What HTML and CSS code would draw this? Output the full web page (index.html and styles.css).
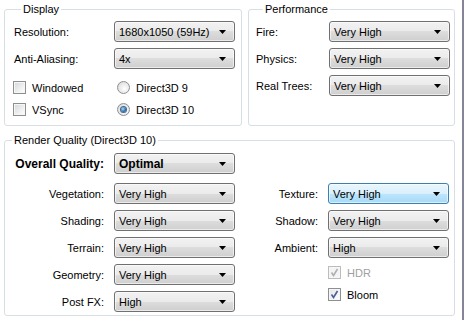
FILE: index.html
```html
<!DOCTYPE html>
<html lang="en">
  <head>
    <meta charset="UTF-8" />
    <title>Graphics Settings</title>
    <link rel="stylesheet" href="styles.css">
  </head>
  <body>
    <div class="panel">
      <div class="top-row">
        <fieldset class="group display">
          <legend>Display</legend>
          <div class="form display-form">
            <label>Resolution:</label>
            <div class="combo"><span>1680x1050 (59Hz)</span><svg class="arrow" width="7" height="4"><polygon points="0,0 7,0 3.5,4" /></svg></div>
            <label>Anti-Aliasing:</label>
            <div class="combo"><span>4x</span><svg class="arrow" width="7" height="4"><polygon points="0,0 7,0 3.5,4" /></svg></div>
          </div>
          <div class="options">
            <div class="opt"><span class="check"></span>Windowed</div>
            <div class="opt"><span class="radio"></span>Direct3D 9</div>
            <div class="opt"><span class="check"></span>VSync</div>
            <div class="opt"><span class="radio on"></span>Direct3D 10</div>
          </div>
        </fieldset>

        <fieldset class="group performance">
          <legend>Performance</legend>
          <div class="form perf-form">
            <label>Fire:</label>
            <div class="combo"><span>Very High</span><svg class="arrow" width="7" height="4"><polygon points="0,0 7,0 3.5,4" /></svg></div>
            <label>Physics:</label>
            <div class="combo"><span>Very High</span><svg class="arrow" width="7" height="4"><polygon points="0,0 7,0 3.5,4" /></svg></div>
            <label>Real Trees:</label>
            <div class="combo"><span>Very High</span><svg class="arrow" width="7" height="4"><polygon points="0,0 7,0 3.5,4" /></svg></div>
          </div>
        </fieldset>
      </div>

      <fieldset class="group render">
        <legend>Render Quality (Direct3D 10)</legend>
        <div class="form left-form overall">
          <label class="bold">Overall Quality:</label>
          <div class="combo bold"><span>Optimal</span><svg class="arrow" width="7" height="4"><polygon points="0,0 7,0 3.5,4" /></svg></div>
        </div>
        <div class="columns">
          <div class="form left-form">
            <label>Vegetation:</label>
            <div class="combo"><span>Very High</span><svg class="arrow" width="7" height="4"><polygon points="0,0 7,0 3.5,4" /></svg></div>
            <label>Shading:</label>
            <div class="combo"><span>Very High</span><svg class="arrow" width="7" height="4"><polygon points="0,0 7,0 3.5,4" /></svg></div>
            <label>Terrain:</label>
            <div class="combo"><span>Very High</span><svg class="arrow" width="7" height="4"><polygon points="0,0 7,0 3.5,4" /></svg></div>
            <label>Geometry:</label>
            <div class="combo"><span>Very High</span><svg class="arrow" width="7" height="4"><polygon points="0,0 7,0 3.5,4" /></svg></div>
            <label>Post FX:</label>
            <div class="combo"><span>High</span><svg class="arrow" width="7" height="4"><polygon points="0,0 7,0 3.5,4" /></svg></div>
          </div>
          <div class="right-col">
            <div class="form right-form">
              <label>Texture:</label>
              <div class="combo hot"><span>Very High</span><svg class="arrow" width="7" height="4"><polygon points="0,0 7,0 3.5,4" /></svg></div>
              <label>Shadow:</label>
              <div class="combo"><span>Very High</span><svg class="arrow" width="7" height="4"><polygon points="0,0 7,0 3.5,4" /></svg></div>
              <label>Ambient:</label>
              <div class="combo"><span>High</span><svg class="arrow" width="7" height="4"><polygon points="0,0 7,0 3.5,4" /></svg></div>
            </div>
            <div class="checks">
              <div class="opt disabled">
                <span class="check checked"><svg width="11" height="11"><path d="M2.5 5.5 L4.5 8.5 L8.5 2" /></svg></span>HDR
              </div>
              <div class="opt">
                <span class="check checked"><svg width="11" height="11"><path d="M2.5 5.5 L4.5 8.5 L8.5 2" /></svg></span>Bloom
              </div>
            </div>
          </div>
        </div>
      </fieldset>
    </div>
  </body>
</html>
```

FILE: styles.css
```css
* {
  margin: 0;
  padding: 0;
  box-sizing: border-box;
}

body {
  background: #fff;
  font-family: "Liberation Sans", Arial, sans-serif;
  font-size: 11px;
  color: #000;
}

.panel {
  width: 464px;
  height: 320px;
  padding: 3px 0 0 4px;
  border-right: 2px solid #85859a;
}

.top-row {
  display: flex;
  gap: 6px;
}

.group {
  border: 1px solid #d5dfe5;
  border-radius: 3px;
  min-width: 0;
}

.group legend {
  margin-left: 7px;
  padding: 0 2px;
  line-height: 13px;
}

.display {
  width: 238px;
  padding: 5px 6px 9px 9px;
}

.performance {
  width: 207px;
  padding: 5px 4px 0 7px;
}

.render {
  width: 451px;
  margin-top: 8px;
  padding: 6px 0 3px 0;
}

.form {
  display: grid;
  row-gap: 6px;
  align-items: center;
}

.display-form {
  grid-template-columns: 100px 121px;
}

.perf-form {
  grid-template-columns: 73px 121px;
}

.left-form {
  grid-template-columns: 99px 121px;
  column-gap: 10px;
}

.right-form {
  grid-template-columns: 83px 121px;
  column-gap: 10px;
}

.left-form label,
.right-form label {
  text-align: right;
}

.bold {
  font-weight: bold;
  font-size: 12px;
}

.overall {
  margin-bottom: 9px;
}

.columns {
  display: flex;
}

.combo {
  height: 21px;
  display: flex;
  align-items: center;
  justify-content: space-between;
  padding: 0 8px 0 4px;
  border: 1px solid #707070;
  border-radius: 3px;
  background: linear-gradient(#f2f2f2 0%, #ebebeb 50%, #dddddd 50%, #cfcfcf 100%);
  box-shadow: inset 0 0 0 1px rgba(255, 255, 255, 0.6);
}

.combo.hot {
  border-color: #3c7fb1;
  background: linear-gradient(#eaf6fd 0%, #d9f0fc 50%, #bee6fd 50%, #a7d9f5 100%);
}

.arrow polygon {
  fill: #000;
}

.options {
  display: grid;
  grid-template-columns: 104px auto;
  row-gap: 9px;
  margin: 12px 0 0 -1px;
}

.opt {
  display: flex;
  align-items: center;
  gap: 6px;
  height: 13px;
}

.check {
  width: 13px;
  height: 13px;
  border: 1px solid #8e8f8f;
  background: linear-gradient(135deg, #d4d6d9 0%, #f4f4f4 70%, #ffffff 100%);
  box-shadow: inset 0 0 0 1px #f6f6f6;
  display: flex;
}

.check svg path {
  fill: none;
  stroke: #4a5f97;
  stroke-width: 1.6;
}

.check.checked {
  background: linear-gradient(135deg, #e3e5e9 0%, #f7f7f7 70%, #ffffff 100%);
}

.disabled {
  color: #a0a0a0;
}

.disabled .check {
  border-color: #bcbcbc;
  background: #f4f4f4;
}

.disabled .check svg path {
  stroke: #b0b0b0;
}

.radio {
  width: 13px;
  height: 13px;
  border-radius: 50%;
  border: 1px solid #8e8f8f;
  background: radial-gradient(circle at 60% 60%, #ffffff 0%, #e6e6e6 60%, #cfcfcf 100%);
  display: flex;
  align-items: center;
  justify-content: center;
}

.radio.on::after {
  content: "";
  width: 5px;
  height: 5px;
  border-radius: 50%;
  background: radial-gradient(circle at 40% 40%, #b9dcf4 0%, #2c6aa0 60%, #163e70 100%);
  box-shadow: 0 0 0 1px #3a6c98;
}

.checks {
  display: flex;
  flex-direction: column;
  gap: 9px;
  margin: 8px 0 0 93px;
}
```
